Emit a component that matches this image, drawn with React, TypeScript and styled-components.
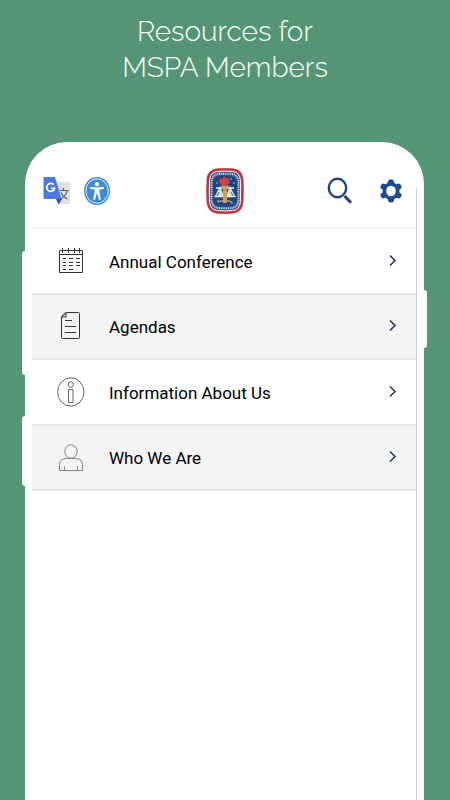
import React from "react";
import styled, { createGlobalStyle } from "styled-components";

const GlobalStyle = createGlobalStyle`
  *, *::before, *::after { box-sizing: border-box; }
  body { margin: 0; background: #549673; }
`;

const Page = styled.div`
  display: flex;
  flex-direction: column;
  min-height: 100vh;
  background: #549673;
  font-family: Roboto, "Liberation Sans", sans-serif;
`;

const Title = styled.h1`
  margin: 0;
  padding: 14px 16px 56px;
  color: #fff;
  font-family: Raleway, Lato, sans-serif;
  font-size: 28px;
  line-height: 36px;
  font-weight: 300;
  text-align: center;
`;

const Phone = styled.main`
  position: relative;
  flex: 1;
  display: flex;
  flex-direction: column;
  margin: 0 26px 0 25px;
  padding: 0 7px;
  background: #fff;
  border-radius: 42px 42px 0 0;
`;

const SideKey = styled.span<{ $side: "left" | "right"; $top: number; $length: number }>`
  position: absolute;
  top: ${(p) => p.$top}px;
  ${(p) => p.$side}: -3px;
  width: 3px;
  height: ${(p) => p.$length}px;
  background: #fff;
  border-radius: ${(p) => (p.$side === "left" ? "3px 0 0 3px" : "0 3px 3px 0")};
`;

const ScreenEdge = styled.span`
  position: absolute;
  top: 46px;
  bottom: 0;
  right: 7px;
  width: 1px;
  background: #c9d6d0;
`;

const Header = styled.header`
  display: grid;
  grid-template-columns: 1fr auto 1fr;
  align-items: center;
  height: 87px;
  padding: 12px 11px 0;
  border-bottom: 2px solid #f0f0f0;
`;

const Tools = styled.div<{ $end?: boolean }>`
  display: flex;
  align-items: center;
  justify-content: ${(p) => (p.$end ? "flex-end" : "flex-start")};
  gap: ${(p) => (p.$end ? 27 : 13)}px;
  padding-right: ${(p) => (p.$end ? 4 : 0)}px;
`;

const IconButton = styled.button`
  display: flex;
  padding: 0;
  border: 0;
  background: none;
  cursor: pointer;
`;

const Menu = styled.ul`
  display: grid;
  grid-auto-rows: 1fr;
  min-height: 262px;
  margin: 0;
  padding: 0;
  list-style: none;
`;

const MenuItem = styled.li`
  display: flex;
  border-bottom: 2px solid #e6e6e6;
  &:nth-child(even) { background: #f3f3f3; }
`;

const MenuLink = styled.a`
  flex: 1;
  display: grid;
  grid-template-columns: 28px 1fr 8px;
  column-gap: 24px;
  align-items: center;
  padding: 0 20px 0 25px;
  color: #000;
  font-size: 17px;
  line-height: 24px;
  text-decoration: none;
`;

const Label = styled.span`
  padding-top: 2px;
`;

const Translate = () => (
  <svg width="28" height="30" viewBox="0 0 28 30">
    <path d="M13 6h12.500q1.500 0 1.500 1.500v19q0 1.500-1.500 1.500H16z" fill="#dedfe2" />
    <path d="M13 23h6l-3.500 5.500z" fill="#3949a3" />
    <path d="M1.500 1H12l6.500 22H2Q.500 23 .500 21.500V2Q.500 1 1.500 1z" fill="#4b7be0" />
    <path d="M10.800 8.700a4 4 0 1 0 .9 3.700H8" fill="none" stroke="#fff" strokeWidth="1.700" />
    <path d="M16.500 14.500h9M20.500 12v2.500M24 14.500c-.5 3.500-3 6.500-6 8.500M18 16.500c1 2.500 3.500 5 6.500 6.500" fill="none" stroke="#59656c" strokeWidth="1.200" />
  </svg>
);

const Accessibility = () => (
  <svg width="26" height="28" viewBox="0 0 26 28">
    <ellipse cx="13" cy="14" rx="13" ry="14" fill="#3d8ad6" />
    <ellipse cx="13" cy="14" rx="11.200" ry="12.200" fill="none" stroke="#fff" strokeWidth=".9" />
    <circle cx="13" cy="7.200" r="2.100" fill="#fff" />
    <path d="M6 10q3.500 0 5 .2h4q1.500-.2 5-.2v1.800l-4.600.6.3 4 1.200 6.100-1.900.4L13.400 17h-.8L11 22.900l-1.900-.4 1.200-6.100.3-4-4.600-.6z" fill="#fff" />
  </svg>
);

const Crest = () => (
  <svg width="38" height="46" viewBox="0 0 38 46" role="img" aria-label="MSPA">
    <path d="M11 .800Q19 0 27 .800q9 1 10 10 .8 12 0 24-1 9.400-10 10.400-8 .8-16 0-9-1-10-10.400-.8-12 0-24Q2 1.800 11 .800z" fill="#c9353b" stroke="#9c2630" strokeWidth=".6" />
    <path d="M11.500 3.500q7.500-.8 15 0 7 .8 7.800 8 .8 11.500 0 23-.8 7.200-7.800 8-7.500.8-15 0-7-.8-7.800-8-.8-11.500 0-23 .8-7.200 7.800-8z" fill="#315385" stroke="#fff" />
    <rect x="5.500" y="5.800" width="27" height="34.400" rx="8" fill="none" stroke="#dce5ef" strokeWidth="2" strokeDasharray="1 .8" />
    <rect x="7.200" y="8" width="23.600" height="30" rx="7" fill="#1d467e" />
    <path d="M9 28l5-10 4 10zM20 28l4-10 5 10z" fill="#d8dce2" />
    <path d="M10 20h18M8.500 28.500h9M20.500 28.500h9" stroke="#f2f2ee" strokeWidth="1.500" />
    <path d="M13 24l-2 4M25 24l2 4" stroke="#52627a" />
    <path d="M14.500 17.500h9l-2.500 3V35h-4V20.500z" fill="#d49b50" />
    <path d="M12 34q7-3 14 0" fill="none" stroke="#c69b6b" strokeWidth="1.500" />
    <path d="M15.500 17q-4-4-1-7l1.500 2q1-2 2-4l2 3 3-1-1 3 2-1q0 3-3 5z" fill="#e53d3d" />
    <path d="M10 15h2M27 15h2M11 33h2M25 35h2M24 11h2" stroke="#9db4d1" />
  </svg>
);

const Search = () => (
  <svg width="26" height="28" viewBox="0 0 26 28" fill="none" stroke="#1d4583">
    <ellipse cx="10.500" cy="11" rx="8.700" ry="9.200" strokeWidth="2.400" />
    <path d="M17.500 19l6.500 6.800" strokeWidth="3" />
  </svg>
);

const Gear = () => (
  <svg width="22" height="24" viewBox="0 0 22 24" fill="#1d4b8c">
    <ellipse cx="11" cy="12" rx="8.500" ry="9" />
    <rect x="8" y=".5" width="6" height="23" rx="2.500" />
    <rect x="8" y=".5" width="6" height="23" rx="2.500" transform="rotate(60 11 12)" />
    <rect x="8" y=".5" width="6" height="23" rx="2.500" transform="rotate(120 11 12)" />
    <ellipse cx="11" cy="12" rx="4.800" ry="5.200" fill="#fff" />
  </svg>
);

const Chevron = () => (
  <svg width="8" height="12" viewBox="0 0 8 12" fill="none" stroke="#18345f" strokeWidth="1.500">
    <path d="M1 .500l5 5-5 5" />
  </svg>
);

const Calendar = () => (
  <svg width="28" height="30" viewBox="0 0 28 30" fill="none" stroke="#333">
    <path d="M2.500 4.500h23v22h-23zM2.500 8.500h23" />
    <path d="M5.500 2v5M11.500 2v5M17.500 2v5M22.500 2v5" />
    <path d="M6 12.500h3M12 12.500h4M19 12.500h4M6 16.500h3M12 16.500h4M19 16.500h4M6 19.500h3M12 19.500h4M19 19.500h4M6 23.500h3M12 23.500h4" />
  </svg>
);

const Document = () => (
  <svg width="28" height="30" viewBox="0 0 28 30" fill="none" stroke="#333">
    <path d="M9 1.500h12.500q1 0 1 1v24q0 1-1 1h-16q-1 0-1-1V6zM9 1.500v4.500H4.500M9 1.500L4.500 6" />
    <path d="M8 9.500h7M8 15.500h11M8 21.500h11" />
  </svg>
);

const Info = () => (
  <svg width="28" height="30" viewBox="0 0 28 30" fill="none" stroke="#555" strokeWidth=".9">
    <ellipse cx="13.800" cy="15" rx="13.200" ry="14.200" />
    <ellipse cx="13.800" cy="7.500" rx="2.600" ry="2.800" />
    <path d="M11.500 12.500h4.500v13h-4.500z" />
  </svg>
);

const Person = () => (
  <svg width="28" height="30" viewBox="0 0 28 30" fill="none" stroke="#777" strokeWidth=".9">
    <ellipse cx="14" cy="9.500" rx="6.200" ry="6.800" />
    <path d="M2.500 28.500v-6q0-6 7-6h9q7 0 7 6v6zM7.500 28.500v-4M20.500 28.500v-4" />
  </svg>
);

const items = [
  { label: "Annual Conference", Icon: Calendar },
  { label: "Agendas", Icon: Document },
  { label: "Information About Us", Icon: Info },
  { label: "Who We Are", Icon: Person },
];

export default function App() {
  return (
    <Page>
      <GlobalStyle />
      <Title>
        Resources for
        <br />
        MSPA Members
      </Title>
      <Phone>
        <SideKey $side="left" $top={109} $length={124} />
        <SideKey $side="left" $top={274} $length={70} />
        <SideKey $side="right" $top={148} $length={58} />
        <ScreenEdge />
        <Header>
          <Tools>
            <IconButton aria-label="Translate"><Translate /></IconButton>
            <IconButton aria-label="Accessibility"><Accessibility /></IconButton>
          </Tools>
          <Crest />
          <Tools $end>
            <IconButton aria-label="Search"><Search /></IconButton>
            <IconButton aria-label="Settings"><Gear /></IconButton>
          </Tools>
        </Header>
        <nav>
          <Menu>
            {items.map(({ label, Icon }) => (
              <MenuItem key={label}>
                <MenuLink href="#">
                  <Icon />
                  <Label>{label}</Label>
                  <Chevron />
                </MenuLink>
              </MenuItem>
            ))}
          </Menu>
        </nav>
      </Phone>
    </Page>
  );
}
